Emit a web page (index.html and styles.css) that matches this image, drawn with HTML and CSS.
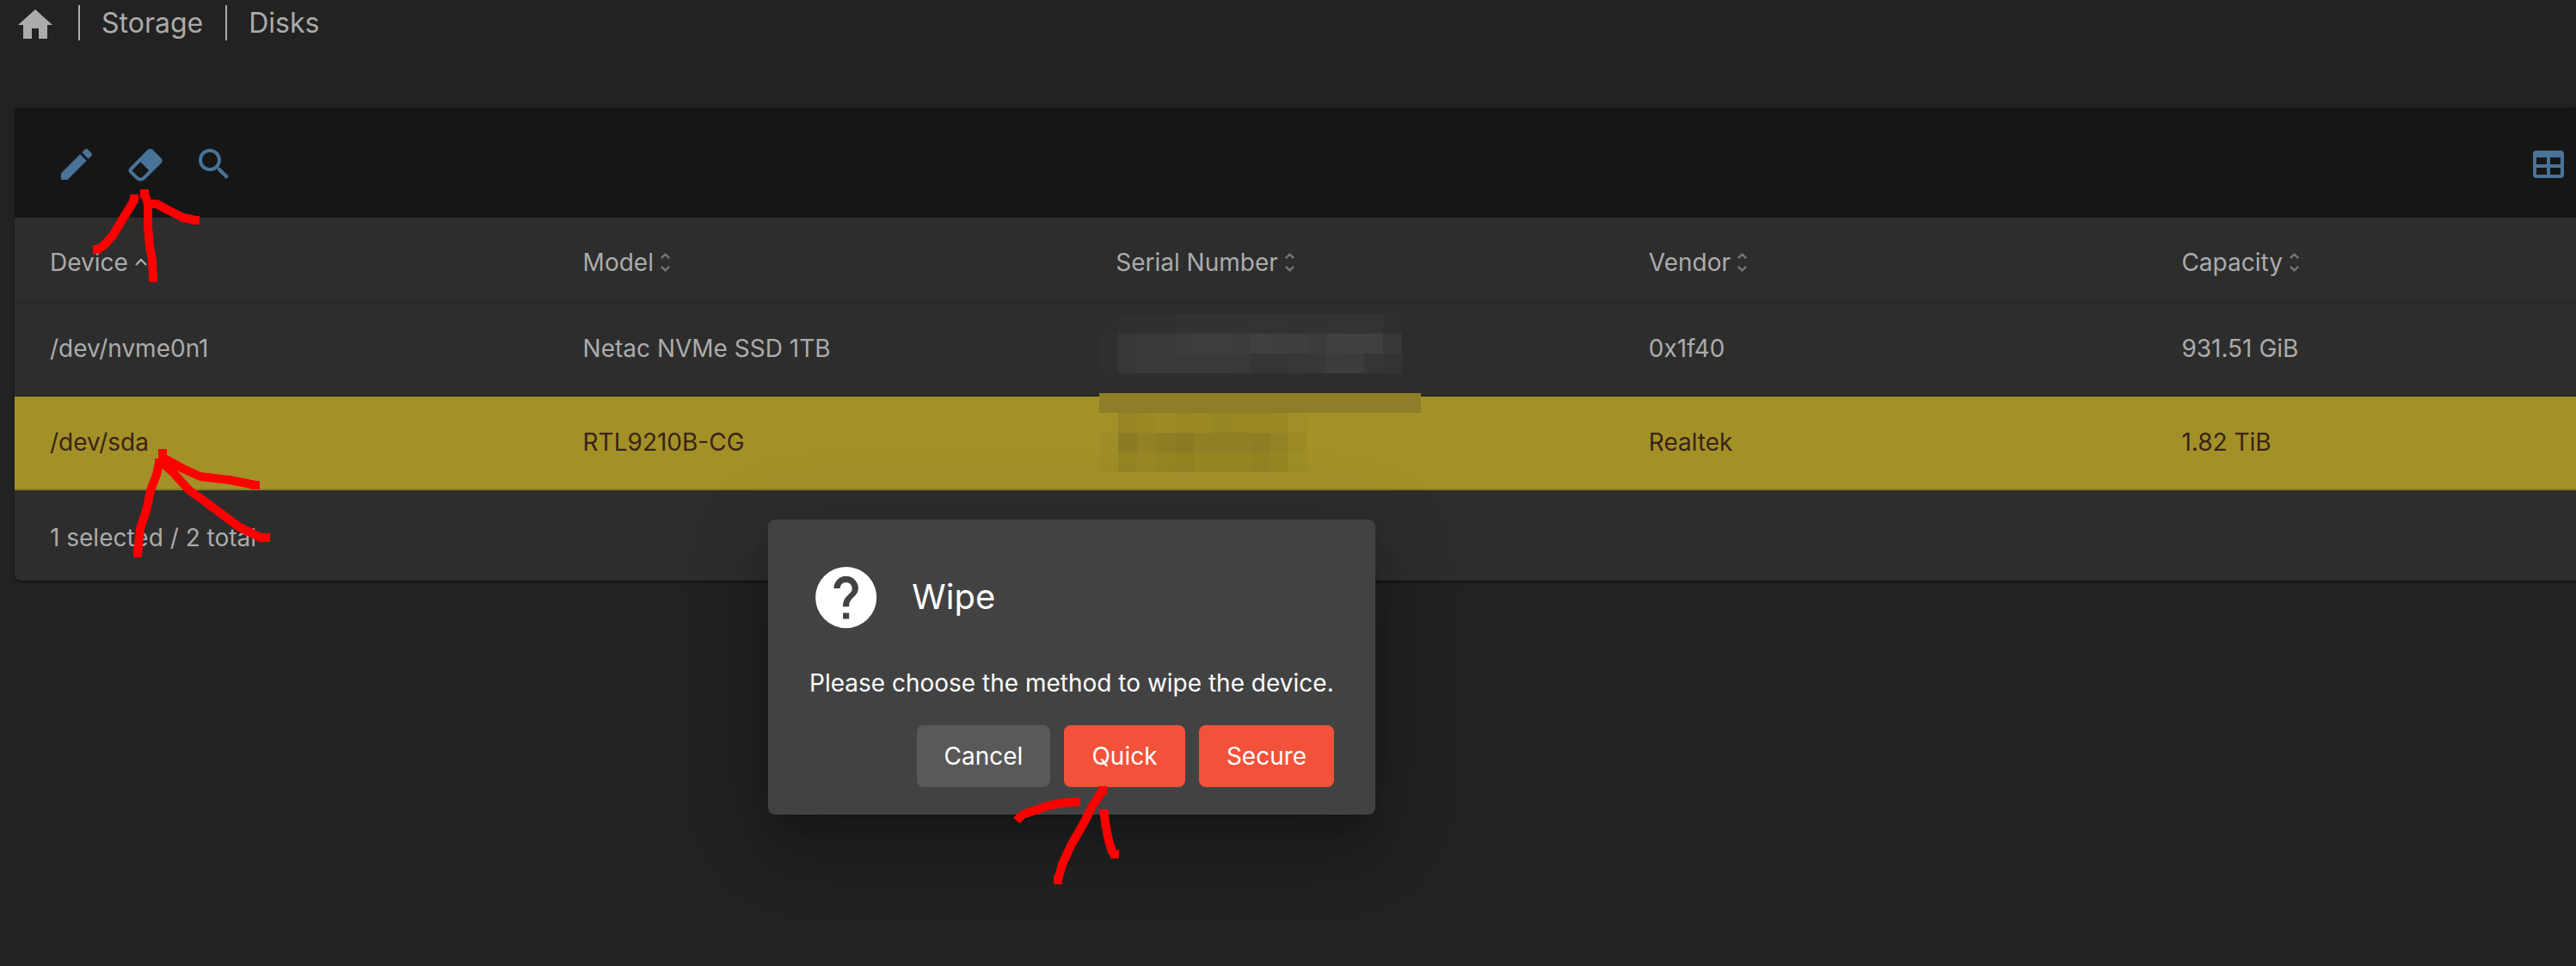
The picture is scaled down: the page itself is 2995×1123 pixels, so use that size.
FILE: index.html
```
<!DOCTYPE html>
<html lang="en">
<head>
<meta charset="utf-8">
<title>Storage | Disks</title>
<link rel="stylesheet" href="styles.css">
</head>
<body>
<nav class="breadcrumb">
  <svg class="icon" viewBox="0 0 24 24"><path d="M10,20V14H14V20H19V12H22L12,3L2,12H5V20H10Z"/></svg>
  <span class="crumb">Storage</span>
  <span class="crumb">Disks</span>
</nav>
<main class="panel">
  <div class="toolbar">
    <svg class="icon" viewBox="0 0 24 24"><path d="M20.71,7.04C21.1,6.65 21.1,6 20.71,5.63L18.37,3.29C18,2.9 17.35,2.9 16.96,3.29L15.12,5.12L18.87,8.87M3,17.25V21H6.75L17.81,9.93L14.06,6.18L3,17.25Z"/></svg>
    <svg class="icon" viewBox="0 0 24 24"><path d="M16.24,3.56L21.19,8.5C21.97,9.29 21.97,10.55 21.19,11.34L12,20.53C10.44,22.09 7.91,22.09 6.34,20.53L2.81,17C2.03,16.21 2.03,14.95 2.81,14.16L13.41,3.56C14.2,2.78 15.46,2.78 16.24,3.56M4.22,15.58L7.76,19.11C8.54,19.9 9.8,19.9 10.59,19.11L14.12,15.58L9.17,10.63L4.22,15.58Z"/></svg>
    <svg class="icon" viewBox="0 0 24 24"><path d="M9.5,3A6.5,6.5 0 0,1 16,9.5C16,11.11 15.41,12.59 14.44,13.73L14.71,14H15.5L20.5,19L19,20.5L14,15.5V14.71L13.73,14.44C12.59,15.41 11.11,16 9.5,16A6.5,6.5 0 0,1 3,9.5A6.5,6.5 0 0,1 9.5,3M9.5,5C7,5 5,7 5,9.5C5,12 7,14 9.5,14C12,14 14,12 14,9.5C14,7 12,5 9.5,5Z"/></svg>
    <svg class="icon columns-icon" viewBox="0 0 24 24"><path d="M5,4H19A2,2 0 0,1 21,6V18A2,2 0 0,1 19,20H5A2,2 0 0,1 3,18V6A2,2 0 0,1 5,4M5,8V12H11V8H5M13,8V12H19V8H13M5,14V18H11V14H5M13,14V18H19V14H13Z"/></svg>
  </div>
  <div class="row head">
    <div class="cell">Device<svg class="sort active" viewBox="0 0 14 22"><path d="M1 14L7 8L13 14"/></svg></div>
    <div class="cell">Model<svg class="sort" viewBox="0 0 11 22"><path d="M.8 6.2L5.5 1.7L10.2 6.2M.8 15.8L5.5 20.3L10.2 15.8"/></svg></div>
    <div class="cell">Serial Number<svg class="sort" viewBox="0 0 11 22"><path d="M.8 6.2L5.5 1.7L10.2 6.2M.8 15.8L5.5 20.3L10.2 15.8"/></svg></div>
    <div class="cell">Vendor<svg class="sort" viewBox="0 0 11 22"><path d="M.8 6.2L5.5 1.7L10.2 6.2M.8 15.8L5.5 20.3L10.2 15.8"/></svg></div>
    <div class="cell">Capacity<svg class="sort" viewBox="0 0 11 22"><path d="M.8 6.2L5.5 1.7L10.2 6.2M.8 15.8L5.5 20.3L10.2 15.8"/></svg></div>
  </div>
  <div class="row">
    <div class="cell">/dev/nvme0n1</div>
    <div class="cell">Netac NVMe SSD 1TB</div>
    <div class="cell"><svg class="mosaic first" viewBox="0 0 17 3" preserveAspectRatio="none" shape-rendering="crispEdges">
      <path fill="#2e2e2e" d="M0 0h1v1H0z"/><path fill="#303030" d="M1 0h3v1H1z"/><path fill="#323232" d="M4 0h4v1H4z"/><path fill="#333" d="M8 0h2v1H8z"/><path fill="#323232" d="M10 0h2v1h-2z"/><path fill="#333" d="M12 0h3v1h-3z"/><path fill="#2f2f2f" d="M15 0h1v1h-1z"/>
      <path fill="#303030" d="M0 1h1v1H0z"/><path fill="#383838" d="M1 1h1v1H1z"/><path fill="#393939" d="M2 1h1v1H2z"/><path fill="#3a3a3a" d="M3 1h1v1H3z"/><path fill="#3d3d3d" d="M4 1h1v1H4z"/><path fill="#3e3e3e" d="M5 1h2v1H5z"/><path fill="#3c3c3c" d="M7 1h1v1H7z"/><path fill="#404040" d="M8 1h1v1H8z"/><path fill="#3f3f3f" d="M9 1h2v1H9z"/><path fill="#3c3c3c" d="M11 1h1v1h-1z"/><path fill="#404040" d="M12 1h1v1h-1z"/><path fill="#414141" d="M13 1h1v1h-1z"/><path fill="#404040" d="M14 1h1v1h-1z"/><path fill="#383838" d="M15 1h1v1h-1z"/>
      <path fill="#2f2f2f" d="M0 2h1v1H0z"/><path fill="#373737" d="M1 2h1v1H1z"/><path fill="#3a3a3a" d="M2 2h5v1H2z"/><path fill="#393939" d="M7 2h1v1H7z"/><path fill="#353535" d="M8 2h2v1H8z"/><path fill="#373737" d="M10 2h1v1h-1z"/><path fill="#383838" d="M11 2h1v1h-1z"/><path fill="#3c3c3c" d="M12 2h2v1h-2z"/><path fill="#353535" d="M14 2h1v1h-1z"/><path fill="#333" d="M15 2h1v1h-1z"/>
    </svg></div>
    <div class="cell">0x1f40</div>
    <div class="cell">931.51 GiB</div>
  </div>
  <div class="row selected">
    <div class="cell">/dev/sda</div>
    <div class="cell">RTL9210B-CG</div>
    <div class="cell"><svg class="mosaic second" viewBox="0 0 17 4" preserveAspectRatio="none" shape-rendering="crispEdges">
      <path fill="#8d7e27" d="M0 0h17v1H0z"/>
      <path fill="#978525" d="M1 1h1v1H1z"/><path fill="#9b8924" d="M2 1h1v1H2z"/><path fill="#9d8b25" d="M3 1h1v1H3z"/><path fill="#998824" d="M4 1h1v1H4z"/><path fill="#9b8a24" d="M5 1h1v1H5z"/><path fill="#978624" d="M6 1h1v1H6z"/><path fill="#9a8824" d="M7 1h2v1H7z"/><path fill="#9b8a24" d="M9 1h1v1H9z"/><path fill="#a08f27" d="M10 1h1v1h-1z"/>
      <path fill="#9f8d27" d="M0 2h1v1H0z"/><path fill="#8d7b24" d="M1 2h1v1H1z"/><path fill="#938224" d="M2 2h1v1H2z"/><path fill="#8f7d24" d="M3 2h1v1H3z"/><path fill="#8c7b23" d="M4 2h1v1H4z"/><path fill="#907f23" d="M5 2h3v1H5z"/><path fill="#8e7d22" d="M8 2h1v1H8z"/><path fill="#948324" d="M9 2h1v1H9z"/><path fill="#9c8b24" d="M10 2h1v1h-1z"/>
      <path fill="#9f8e27" d="M0 3h1v1H0z"/><path fill="#948424" d="M1 3h1v1H1z"/><path fill="#998825" d="M2 3h1v1H2z"/><path fill="#968524" d="M3 3h1v1H3z"/><path fill="#938323" d="M4 3h1v1H4z"/><path fill="#968624" d="M5 3h3v1H5z"/><path fill="#938323" d="M8 3h1v1H8z"/><path fill="#968624" d="M9 3h1v1H9z"/><path fill="#9d8e25" d="M10 3h1v1h-1z"/>
    </svg></div>
    <div class="cell">Realtek</div>
    <div class="cell">1.82 TiB</div>
  </div>
  <div class="footer">1 selected / 2 total</div>
</main>

<section class="dialog" role="dialog">
  <header class="dialog-head">
    <svg class="help" viewBox="0 0 24 24"><path d="M15.07,11.25L14.17,12.17C13.45,12.89 13,13.5 13,15H11V14.5C11,13.39 11.45,12.39 12.17,11.67L13.41,10.41C13.78,10.05 14,9.55 14,9C14,7.89 13.1,7 12,7A2,2 0 0,0 10,9H8A4,4 0 0,1 12,5A4,4 0 0,1 16,9C16,9.88 15.64,10.67 15.07,11.25M13,19H11V17H13M12,2A10,10 0 0,0 2,12A10,10 0 0,0 12,22A10,10 0 0,0 22,12C22,6.47 17.5,2 12,2Z"/></svg>
    <span class="title">Wipe</span>
  </header>
  <p class="message">Please choose the method to wipe the device.</p>
  <div class="actions">
    <button class="btn cancel">Cancel</button>
    <button class="btn quick">Quick</button>
    <button class="btn secure">Secure</button>
  </div>
</section>

<svg class="marks" viewBox="0 0 2995 1123">
  <path d="M156 231L153 238L143 254L131 274L120 286L113 290M168 225L172 237L172 263L174 287L177 302L178 323M175 237L182 237L197 245L213 253L227 256"/>
  <path d="M185 538L182 552L175 570L171 590L163 615L160 643M189 527L189 538L200 548L220 570L237 582L257 597L277 612L303 625L309 625M189 532L213 545L233 554L267 558L297 564"/>
  <path d="M1182 954C1187 948 1191 945 1195 945L1217 937L1237 933L1256 932M1282 919L1270 937L1260 957L1245 983L1235 1005L1230 1023M1284 946L1285 957L1289 977L1293 990L1296 993"/>
  <g>
    <rect x="151" y="226" width="10" height="10"/><rect x="108" y="285" width="10" height="10"/><rect x="163" y="220" width="10" height="10"/><rect x="173" y="318" width="10" height="10"/><rect x="222" y="251" width="10" height="10"/>
    <rect x="184" y="522" width="10" height="10"/><rect x="180" y="533" width="10" height="10"/><rect x="155" y="638" width="10" height="10"/><rect x="304" y="620" width="10" height="10"/><rect x="292" y="559" width="10" height="10"/>
    <rect x="1277" y="914" width="10" height="10"/><rect x="1225" y="1018" width="10" height="10"/><rect x="1279" y="941" width="10" height="10"/><rect x="1291" y="988" width="10" height="10"/>
  </g>
</svg>
</body>
</html>
```
FILE: styles.css
```
* { box-sizing: border-box; }

body {
  margin: 0;
  height: 1123px;
  overflow: hidden;
  background: #222;
  color: #ababab;
  font: 28px/40px Inter, sans-serif;
}

.icon { width: 48px; height: 48px; flex: none; fill: currentColor; }

.breadcrumb {
  display: flex;
  align-items: flex-start;
  height: 125px;
  padding: 5px 0 0 17px;
  font-size: 32px;
}
.crumb {
  height: 41px;
  margin: 1px 0 0 26px;
  padding-left: 25px;
  border-left: 2px solid #ababab;
  line-height: 41px;
}

.panel {
  margin-left: 17px;
  background: #2d2d2d;
  border-radius: 0 0 0 8px;
  box-shadow: 0 4px 2px -2px rgba(0,0,0,.2), 0 2px 2px rgba(0,0,0,.14), 0 2px 6px rgba(0,0,0,.12);
}

.toolbar {
  display: flex;
  align-items: center;
  gap: 32px;
  height: 128px;
  padding: 4px 8px 0 48px;
  background: #161616;
  color: #4a7398;
}
.toolbar .columns-icon { margin-left: auto; }

.row {
  display: grid;
  grid-template-columns: repeat(4, 619.6px) 1fr;
  height: 108px;
  border-bottom: 2px solid #282828;
}
.row.head { height: 100px; }
.cell {
  position: relative;
  display: flex;
  align-items: center;
  padding: 0 0 2px 41px;
  white-space: nowrap;
}
.row.head .cell { padding-top: 5px; padding-bottom: 0; }
.row.selected {
  height: 109px;
  background: #a39128;
  border-color: #8d7d26;
  color: #3a2317;
}
.sort {
  width: 11px;
  height: 22px;
  margin-left: 8px;
  fill: none;
  stroke: #757575;
  stroke-width: 2.4;
}
.sort.active { width: 14px; stroke: #ababab; }

.mosaic { position: absolute; left: 21.8px; width: 374px; }
.mosaic.first { top: 12px; height: 69px; }
.mosaic.second { top: -4px; height: 92px; }

.footer {
  display: flex;
  align-items: center;
  height: 105px;
  padding: 4px 0 0 41px;
}

.dialog {
  position: absolute;
  left: 893px;
  top: 604px;
  width: 706px;
  height: 343px;
  padding: 48px;
  border-radius: 8px;
  background: #424242;
  color: #fff;
  box-shadow: 0 22px 30px -14px rgba(0,0,0,.2), 0 48px 76px 6px rgba(0,0,0,.14), 0 18px 92px 16px rgba(0,0,0,.12);
}
.dialog-head { display: flex; align-items: center; gap: 34px; height: 85px; }
.help { width: 85.3px; height: 85.3px; fill: currentColor; }
.title { padding-bottom: 2px; font-size: 40px; line-height: 48px; }
.message { margin: 33px 0 0; line-height: 48px; white-space: nowrap; }
.actions { display: flex; justify-content: flex-end; gap: 16px; margin-top: 25px; }
.btn {
  height: 72px;
  padding: 0;
  border: 0;
  border-radius: 8px;
  background: #f2523a;
  color: #fff;
  font: inherit;
}
.cancel { width: 155px; background: #595959; }
.quick { width: 141px; }
.secure { width: 157px; }

.marks {
  position: absolute;
  left: 0;
  top: 0;
  width: 2995px;
  height: 1123px;
  pointer-events: none;
  fill: red;
}
.marks path { fill: none; stroke: red; stroke-width: 10; stroke-linejoin: round; }
```
